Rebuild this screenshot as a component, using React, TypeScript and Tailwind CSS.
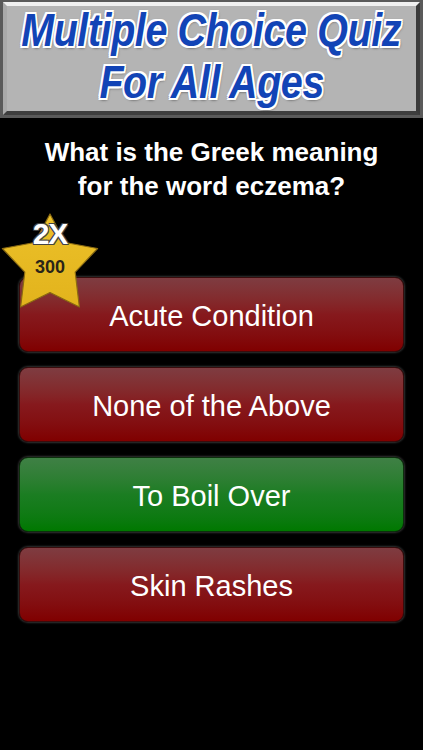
import React from 'react';

const answers = [
  { text: 'Acute Condition', correct: false },
  { text: 'None of the Above', correct: false },
  { text: 'To Boil Over', correct: true },
  { text: 'Skin Rashes', correct: false },
];

function TitleLine({ children }: { children: React.ReactNode }) {
  return (
    <div className="h-[52px] leading-[52px] whitespace-nowrap">
      <span className="inline-block scale-x-[0.84] text-[47px] font-bold italic tracking-[-0.5px] text-[#1244b6] [text-shadow:-2px_-2px_0_#fff,2px_-2px_0_#fff,-2px_2px_0_#fff,2px_2px_0_#fff,0_-2px_0_#fff,0_2px_0_#fff,-2px_0_0_#fff,2px_0_0_#fff,0_0_3px_#333,1px_2px_3px_#444]">
        {children}
      </span>
    </div>
  );
}

function Header() {
  return (
    <div className="h-[118px] bg-[#5a5a5a] pl-[3px] pt-[2px] pr-[3px] pb-[3px]">
      <div className="h-full border-t-4 border-l-4 border-r-4 border-b-4 border-t-[#f0f0f0] border-l-[#a9a9a9] border-r-[#3a3a3a] border-b-[#3e3e3e] bg-[#8c8c8c]">
        <div className="flex h-full flex-col items-center justify-center bg-[#b4b4b4] pb-[6px] font-['Liberation_Sans',Arial,sans-serif]">
          <TitleLine>Multiple Choice Quiz</TitleLine>
          <TitleLine>For All Ages</TitleLine>
        </div>
      </div>
    </div>
  );
}

function Star() {
  return (
    <div className="absolute left-0 top-[-65px] z-10 h-[100px] w-[100px]">
      <svg viewBox="0 0 100 100" className="absolute inset-0 h-full w-full">
        <defs>
          <linearGradient id="starFill" x1="0" y1="0" x2="0" y2="1">
            <stop offset="0" stopColor="#ecc12a" />
            <stop offset="1" stopColor="#e2b31c" />
          </linearGradient>
        </defs>
        <polygon
          points="50,2 65.3,30.5 97.6,36.5 75.2,60.2 79.4,95 50,80.5 20.6,95 24.8,60.2 2.4,36.5 34.7,30.5"
          fill="url(#starFill)"
          stroke="#8a6a12"
          strokeWidth="1.2"
          strokeLinejoin="round"
        />
      </svg>
      <div className="absolute left-0 right-0 top-[6px] text-center text-[30px] font-bold leading-[32px] tracking-[-1px] text-white [text-shadow:-1px_-1px_0_#444,1px_-1px_0_#444,-1px_1px_0_#444,1px_1px_0_#444] font-['Liberation_Sans',Arial,sans-serif]">
        2X
      </div>
      <div className="absolute left-0 right-0 top-[44px] text-center text-[18px] font-bold leading-[22px] text-[#2a2418] font-['Liberation_Sans',Arial,sans-serif]">
        300
      </div>
    </div>
  );
}

export default function App() {
  return (
    <div className="h-[750px] w-full overflow-hidden bg-black">
      <Header />
      <div className="pt-[17px] text-center text-[26px] font-bold leading-[34px] text-white font-['Liberation_Sans',Arial,sans-serif]">
        <div>What is the Greek meaning</div>
        <div>for the word eczema?</div>
      </div>
      <div className="relative mt-[74px] flex flex-col gap-[15px] pl-[19px] pr-[19px]">
        <Star />
        {answers.map((a) => (
          <div
            key={a.text}
            className={
              a.correct
                ? 'flex h-[75px] items-center justify-center rounded-[9px] border border-[#0c300c] bg-linear-to-b from-[#3f8045] via-[#1b7d22] to-[#007800] pt-[3px] shadow-[0_0_2px_1px_rgba(90,90,90,0.55)]'
                : 'flex h-[75px] items-center justify-center rounded-[9px] border border-[#3a0c0c] bg-linear-to-b from-[#7e3c41] via-[#86191d] to-[#800000] pt-[3px] shadow-[0_0_2px_1px_rgba(90,90,90,0.55)]'
            }
          >
            <span className="text-[29px] leading-none text-white font-['Liberation_Sans',Arial,sans-serif]">
              {a.text}
            </span>
          </div>
        ))}
      </div>
    </div>
  );
}
